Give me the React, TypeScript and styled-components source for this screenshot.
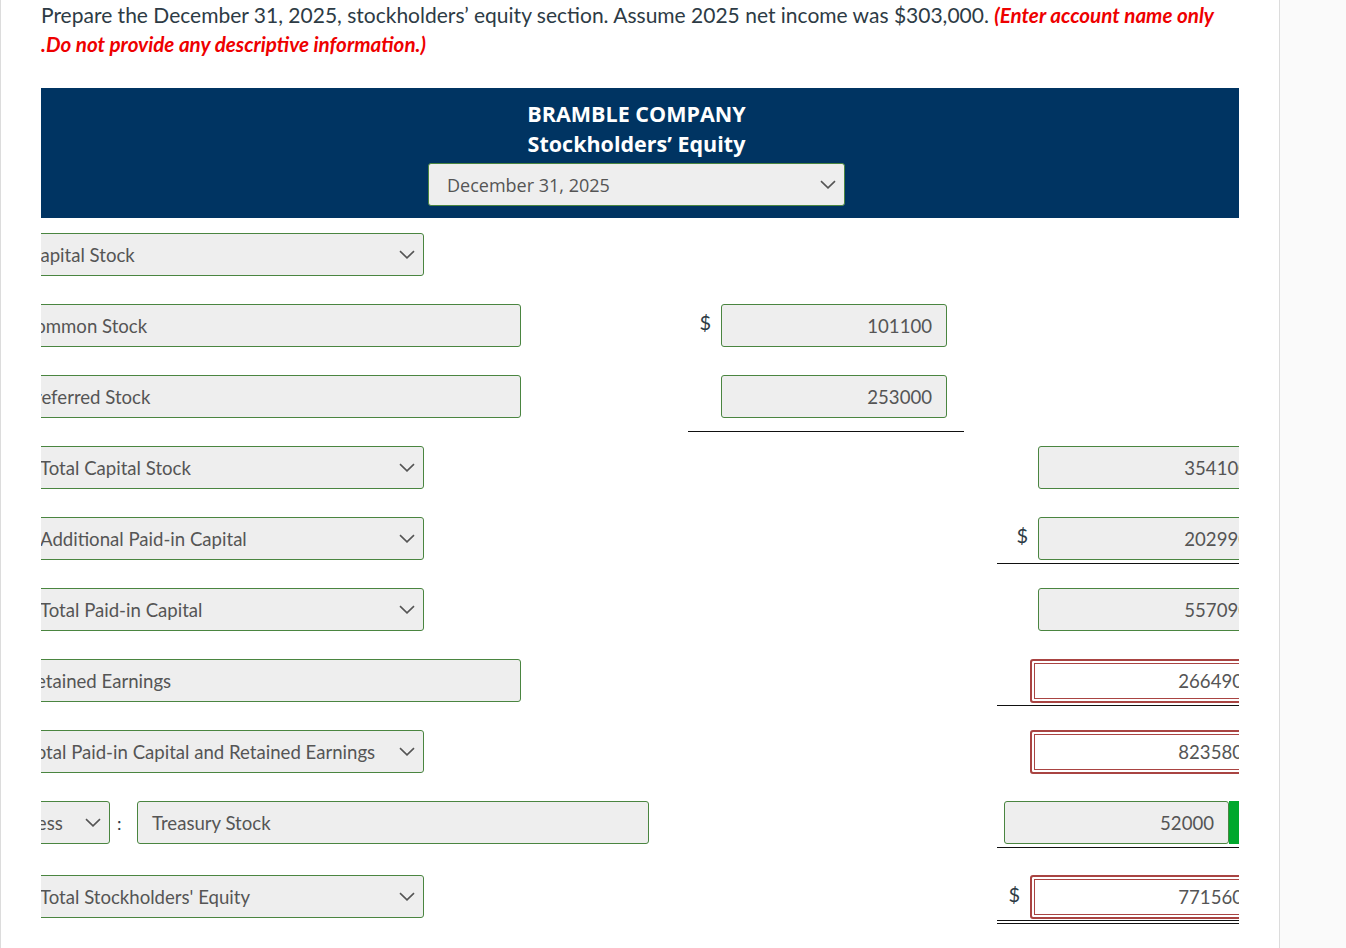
import React from "react";
import styled, { createGlobalStyle, css } from "styled-components";

const GlobalStyle = createGlobalStyle`
  html, body { margin: 0; padding: 0; background: #fff; }
  body { font-family: Lato, "Open Sans", "Liberation Sans", sans-serif; }
`;

const CONTENT_LEFT = 41;

const Page = styled.div`
  display: flex;
  height: 100vh;
  min-height: 948px;
  overflow: hidden;
`;

const Main = styled.main`
  flex: none;
  width: 1279px;
  box-sizing: border-box;
  border-left: 1px solid #dcdcdc;
  padding: 0 40px;
  overflow: hidden;
`;

const Sidebar = styled.aside`
  flex: 1;
  border-left: 1px solid #dcdcdc;
  background: #fafafa;
`;

const Instructions = styled.p`
  margin: 0;
  font-size: 21px;
  line-height: 29px;
  color: #2d3b45;
`;

const Warn = styled.em`
  color: #ee0000;
  font-weight: 700;
  font-style: italic;
  font-size: 20.6px;
  line-height: 20px;
`;

const Sheet = styled.div`
  margin-top: 30px;
  overflow: hidden;
`;

const Header = styled.div`
  height: 130px;
  box-sizing: border-box;
  background: #003462;
  padding: 11px 7px 0 0;
  display: flex;
  flex-direction: column;
  align-items: center;
`;

const Title = styled.div`
  color: #fff;
  font-family: "Open Sans", Lato, sans-serif;
  font-weight: 700;
  font-size: 21.5px;
  line-height: 30px;
`;

const boxBase = css`
  box-sizing: border-box;
  height: 43px;
  border: 1px solid #4a8540;
  border-radius: 3px;
  background: #eeeeee;
  display: flex;
  align-items: center;
  font-size: 18.6px;
  color: #555;
  white-space: nowrap;
`;

const DateSelect = styled.div`
  ${boxBase}
  margin-top: 4px;
  width: 417px;
  padding: 0 8px 0 18px;
  justify-content: space-between;
  font-family: "Open Sans", Lato, sans-serif;
  font-size: 18px;
`;

const Rows = styled.div`
  margin-top: 15px;
  display: flex;
  flex-direction: column;
`;

const Row = styled.div<{ $shift?: number }>`
  display: grid;
  grid-template-columns: 647px 276px 33px 267px;
  height: 71px;
  align-items: start;
  margin-top: ${(p) => p.$shift ?? 0}px;
`;

const LabelCell = styled.div`
  display: flex;
  align-items: center;
`;

const LabelBox = styled.div<{ $left: number; $right: number }>`
  ${boxBase}
  flex: none;
  margin-left: ${(p) => p.$left - CONTENT_LEFT}px;
  width: ${(p) => p.$right - p.$left}px;
  padding: 0 8px 0 12px;
  justify-content: space-between;
  overflow: hidden;
`;

const Colon = styled.span`
  width: 27px;
  box-sizing: border-box;
  padding-left: 7px;
  font-size: 18px;
  color: #2d3b45;
`;

const TextBox = styled.div<{ $width: number }>`
  ${boxBase}
  width: ${(p) => p.$width}px;
  padding-left: 14px;
`;

const ValueCell = styled.div<{ $rule?: "single" | "double"; $pad?: number }>`
  padding-bottom: ${(p) => p.$pad ?? 0}px;
  border-bottom: ${(p) =>
    p.$rule === "single" ? "1px solid #111" : p.$rule === "double" ? "4px double #111" : "none"};
`;

const ValueLine = styled.div<{ $padRight?: number }>`
  display: flex;
  justify-content: flex-end;
  align-items: center;
  gap: 10px;
  padding-right: ${(p) => p.$padRight ?? 0}px;
`;

const Dollar = styled.span`
  font-size: 20px;
  color: #2d3b45;
  margin-bottom: 7px;
`;

const Amount = styled.div<{ $width?: number }>`
  ${boxBase}
  flex: none;
  width: ${(p) => p.$width ?? 226}px;
  justify-content: flex-end;
  padding-right: 14px;
`;

const WrongAmount = styled.div`
  ${boxBase}
  flex: none;
  width: 234px;
  height: 44px;
  justify-content: flex-end;
  padding-right: 19px;
  background: #fff;
  border: 2px solid #a94442;
  box-shadow: inset 0 0 0 2px #fff, inset 0 0 0 3px #a94442;
`;

const CorrectMark = styled.div`
  flex: none;
  width: 35px;
  height: 43px;
  background: #00a82d;
  margin-left: -10px;
`;

const Chevron = () => (
  <svg width="16" height="9" viewBox="0 0 16 9" aria-hidden="true">
    <path d="M1 1.2 L8 7.8 L15 1.2" fill="none" stroke="#555" strokeWidth="1.6" />
  </svg>
);

const Spacer = styled.div``;

export default function App() {
  return (
    <>
      <GlobalStyle />
      <Page>
        <Main>
          <Instructions>
            Prepare the December 31, 2025, stockholders’ equity section. Assume 2025 net income was $303,000.{" "}
            <Warn>
              (Enter account name only
              <br />
              .Do not provide any descriptive information.)
            </Warn>
          </Instructions>

          <Sheet>
            <Header>
              <Title>BRAMBLE COMPANY</Title>
              <Title>Stockholders’ Equity</Title>
              <DateSelect>
                <span>December 31, 2025</span>
                <Chevron />
              </DateSelect>
            </Header>

            <Rows>
              <Row>
                <LabelCell>
                  <LabelBox $left={15} $right={424}>
                    <span>Capital Stock</span>
                    <Chevron />
                  </LabelBox>
                </LabelCell>
              </Row>

              <Row>
                <LabelCell>
                  <LabelBox $left={10} $right={521}>
                    <span>Common Stock</span>
                  </LabelBox>
                </LabelCell>
                <ValueCell>
                  <ValueLine $padRight={17}>
                    <Dollar>$</Dollar>
                    <Amount>101100</Amount>
                  </ValueLine>
                </ValueCell>
              </Row>

              <Row>
                <LabelCell>
                  <LabelBox $left={11} $right={521}>
                    <span>Preferred Stock</span>
                  </LabelBox>
                </LabelCell>
                <ValueCell $rule="single" $pad={13}>
                  <ValueLine $padRight={17}>
                    <Amount>253000</Amount>
                  </ValueLine>
                </ValueCell>
              </Row>

              <Row>
                <LabelCell>
                  <LabelBox $left={27} $right={424}>
                    <span>Total Capital Stock</span>
                    <Chevron />
                  </LabelBox>
                </LabelCell>
                <Spacer />
                <Spacer />
                <ValueCell>
                  <ValueLine>
                    <Amount>354100</Amount>
                  </ValueLine>
                </ValueCell>
              </Row>

              <Row>
                <LabelCell>
                  <LabelBox $left={27} $right={424}>
                    <span>Additional Paid-in Capital</span>
                    <Chevron />
                  </LabelBox>
                </LabelCell>
                <Spacer />
                <Spacer />
                <ValueCell $rule="single" $pad={3}>
                  <ValueLine>
                    <Dollar>$</Dollar>
                    <Amount>202990</Amount>
                  </ValueLine>
                </ValueCell>
              </Row>

              <Row>
                <LabelCell>
                  <LabelBox $left={27} $right={424}>
                    <span>Total Paid-in Capital</span>
                    <Chevron />
                  </LabelBox>
                </LabelCell>
                <Spacer />
                <Spacer />
                <ValueCell>
                  <ValueLine>
                    <Amount>557090</Amount>
                  </ValueLine>
                </ValueCell>
              </Row>

              <Row>
                <LabelCell>
                  <LabelBox $left={12} $right={521}>
                    <span>Retained Earnings</span>
                  </LabelBox>
                </LabelCell>
                <Spacer />
                <Spacer />
                <ValueCell $rule="single" $pad={2}>
                  <ValueLine>
                    <WrongAmount>266490</WrongAmount>
                  </ValueLine>
                </ValueCell>
              </Row>

              <Row>
                <LabelCell>
                  <LabelBox $left={14} $right={424}>
                    <span>Total Paid-in Capital and Retained Earnings</span>
                    <Chevron />
                  </LabelBox>
                </LabelCell>
                <Spacer />
                <Spacer />
                <ValueCell>
                  <ValueLine>
                    <WrongAmount>823580</WrongAmount>
                  </ValueLine>
                </ValueCell>
              </Row>

              <Row>
                <LabelCell>
                  <LabelBox $left={15} $right={110}>
                    <span>Less</span>
                    <Chevron />
                  </LabelBox>
                  <Colon>:</Colon>
                  <TextBox $width={512}>Treasury Stock</TextBox>
                </LabelCell>
                <Spacer />
                <Spacer />
                <ValueCell $rule="single" $pad={3}>
                  <ValueLine>
                    <Amount $width={225}>52000</Amount>
                    <CorrectMark />
                  </ValueLine>
                </ValueCell>
              </Row>

              <Row $shift={3}>
                <LabelCell>
                  <LabelBox $left={27} $right={424}>
                    <span>Total Stockholders' Equity</span>
                    <Chevron />
                  </LabelBox>
                </LabelCell>
                <Spacer />
                <Spacer />
                <ValueCell $rule="double" $pad={1}>
                  <ValueLine>
                    <Dollar>$</Dollar>
                    <WrongAmount>771560</WrongAmount>
                  </ValueLine>
                </ValueCell>
              </Row>
            </Rows>
          </Sheet>
        </Main>
        <Sidebar />
      </Page>
    </>
  );
}
